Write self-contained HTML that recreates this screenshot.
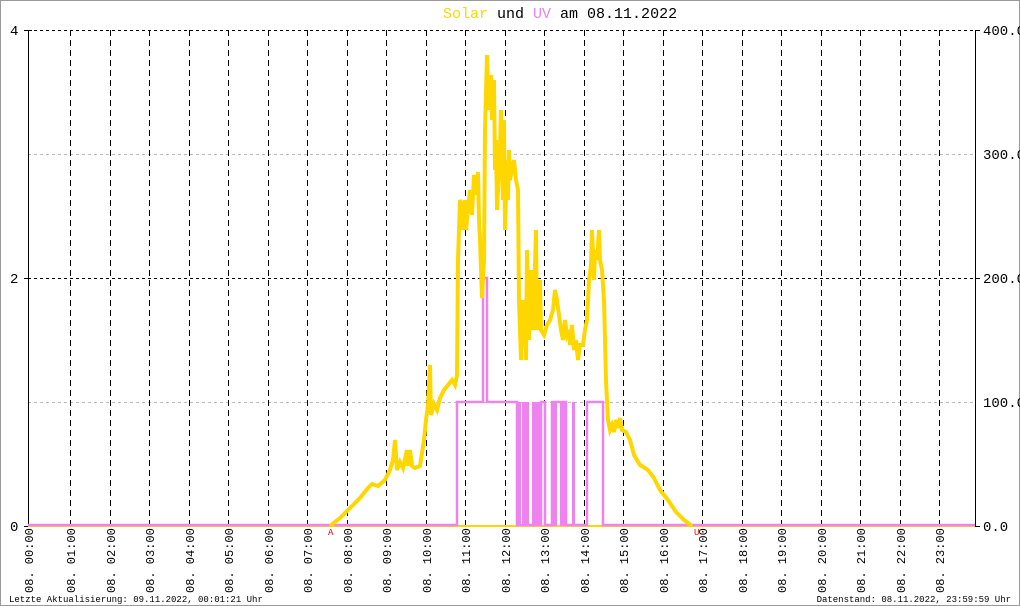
<!DOCTYPE html>
<html><head><meta charset="utf-8"><style>
html,body{margin:0;padding:0;background:#fff}
svg{display:block}
text{font-family:"Liberation Mono",monospace}
</style></head><body>
<svg width="1020" height="606" viewBox="0 0 1020 606" xmlns="http://www.w3.org/2000/svg">
<rect x="0.5" y="0.5" width="1019" height="605" fill="#fff" stroke="#999"/>
<text x="443" y="18" font-size="15" fill="#000"><tspan fill="#FFD700">Solar</tspan> und <tspan fill="#EE82EE">UV</tspan> am 08.11.2022</text>
<g stroke="#bbb" stroke-dasharray="3,3" stroke-width="1">
<line x1="28" y1="154.5" x2="975" y2="154.5"/><line x1="28" y1="402.5" x2="975" y2="402.5"/>
</g>
<g stroke="#000" stroke-dasharray="3,3" stroke-width="1">
<line x1="28" y1="30.5" x2="975" y2="30.5"/><line x1="28" y1="278.5" x2="975" y2="278.5"/>
</g>
<g stroke="#000" stroke-dasharray="6,4" stroke-width="1">
<line x1="70.5" y1="30" x2="70.5" y2="526"/><line x1="110.5" y1="30" x2="110.5" y2="526"/><line x1="149.5" y1="30" x2="149.5" y2="526"/><line x1="189.5" y1="30" x2="189.5" y2="526"/><line x1="228.5" y1="30" x2="228.5" y2="526"/><line x1="268.5" y1="30" x2="268.5" y2="526"/><line x1="307.5" y1="30" x2="307.5" y2="526"/><line x1="347.5" y1="30" x2="347.5" y2="526"/><line x1="386.5" y1="30" x2="386.5" y2="526"/><line x1="426.5" y1="30" x2="426.5" y2="526"/><line x1="465.5" y1="30" x2="465.5" y2="526"/><line x1="505.5" y1="30" x2="505.5" y2="526"/><line x1="544.5" y1="30" x2="544.5" y2="526"/><line x1="584.5" y1="30" x2="584.5" y2="526"/><line x1="623.5" y1="30" x2="623.5" y2="526"/><line x1="663.5" y1="30" x2="663.5" y2="526"/><line x1="702.5" y1="30" x2="702.5" y2="526"/><line x1="742.5" y1="30" x2="742.5" y2="526"/><line x1="781.5" y1="30" x2="781.5" y2="526"/><line x1="821.5" y1="30" x2="821.5" y2="526"/><line x1="860.5" y1="30" x2="860.5" y2="526"/><line x1="900.5" y1="30" x2="900.5" y2="526"/><line x1="939.5" y1="30" x2="939.5" y2="526"/>
</g>
<g stroke="#000" stroke-width="1">
<line x1="28.5" y1="30" x2="28.5" y2="527"/><line x1="975.5" y1="30" x2="975.5" y2="527"/>
<line x1="24" y1="30.5" x2="32" y2="30.5"/><line x1="24" y1="278.5" x2="28" y2="278.5"/><line x1="24" y1="526.5" x2="28" y2="526.5"/>
<line x1="975" y1="30.5" x2="980" y2="30.5"/><line x1="975" y1="278.5" x2="980" y2="278.5"/><line x1="975" y1="526.5" x2="980" y2="526.5"/>
</g>
<g font-size="14" fill="#000">
<text x="10" y="35">4</text><text x="10" y="283">2</text><text x="10" y="531">0</text>
<text x="983" y="35">400.0</text><text x="983" y="159">300.0</text><text x="983" y="283">200.0</text><text x="983" y="407">100.0</text><text x="983" y="531">0.0</text>
</g>
<line x1="28" y1="526" x2="975" y2="526" stroke="#FFD700" stroke-width="2"/>
<g fill="#EE82EE">
<rect x="517" y="402" width="4" height="124"/>
<rect x="522" y="402" width="7" height="124"/>
<rect x="532" y="402" width="9" height="124"/>
<rect x="553" y="402" width="4" height="124"/>
<rect x="560" y="402" width="6" height="124"/>
<rect x="572" y="402" width="3" height="124"/>
</g>
<polyline fill="none" stroke="#EE82EE" stroke-width="2.5" points="28,525 457,525 457,402 483,402 483,278 487,278 487,402 517,402 517,525 541,525 541,402 545,402 545,525 552,525 552,402 566,402 566,525 587,525 587,402 603,402 603,525 975,525"/>
<polyline fill="none" stroke="#FFD700" stroke-width="4" stroke-linejoin="miter" points="330,526 340,518 350,508 360,498 368,488 372,484 378,486 385,480 390,470 393,460 395,440 397,470 400,462 403,468 407,450 408,466 410,450 412,466 415,468 420,466 424,440 426,420 428,405 430,365 431,415 434,404 437,410 440,398 444,390 448,385 452,380 455,385 457,375 458,260 460,200 462,205 463,230 465,200 466,230 468,210 470,190 472,215 474,175 476,195 478,172 479,220 480,240 482,298 484,260 485,130 487,55 488,90 489,110 491,75 492,120 494,80 495,170 496,140 497,210 498,190 500,150 501,110 503,200 504,120 505,230 507,160 508,200 509,150 510,180 512,170 514,160 516,180 518,190 519,300 521,360 523,300 525,320 526,360 527,250 529,340 531,270 533,330 534,300 536,230 537,330 538,310 540,280 541,330 544,335 547,325 550,320 553,310 555,290 557,300 559,315 561,330 563,340 565,320 567,335 569,330 570,345 572,325 574,350 576,340 578,360 580,345 583,345 585,330 587,320 589,280 591,265 592,230 594,280 595,250 597,260 599,230 600,260 602,270 604,300 606,380 608,420 610,430 612,425 614,432 616,420 618,428 620,418 622,430 626,432 630,440 634,455 640,465 648,470 654,478 660,490 668,500 676,512 684,520 692,526"/>
<text x="328" y="535" font-size="9" fill="#e00">A</text>
<text x="694" y="535" font-size="9" fill="#e00">U</text>
<g font-size="12" fill="#000">
<text transform="translate(33,593) rotate(-90)">08. 00:00</text>
<text transform="translate(75,593) rotate(-90)">08. 01:00</text>
<text transform="translate(115,593) rotate(-90)">08. 02:00</text>
<text transform="translate(154,593) rotate(-90)">08. 03:00</text>
<text transform="translate(194,593) rotate(-90)">08. 04:00</text>
<text transform="translate(233,593) rotate(-90)">08. 05:00</text>
<text transform="translate(273,593) rotate(-90)">08. 06:00</text>
<text transform="translate(312,593) rotate(-90)">08. 07:00</text>
<text transform="translate(352,593) rotate(-90)">08. 08:00</text>
<text transform="translate(391,593) rotate(-90)">08. 09:00</text>
<text transform="translate(431,593) rotate(-90)">08. 10:00</text>
<text transform="translate(470,593) rotate(-90)">08. 11:00</text>
<text transform="translate(510,593) rotate(-90)">08. 12:00</text>
<text transform="translate(549,593) rotate(-90)">08. 13:00</text>
<text transform="translate(589,593) rotate(-90)">08. 14:00</text>
<text transform="translate(628,593) rotate(-90)">08. 15:00</text>
<text transform="translate(668,593) rotate(-90)">08. 16:00</text>
<text transform="translate(707,593) rotate(-90)">08. 17:00</text>
<text transform="translate(747,593) rotate(-90)">08. 18:00</text>
<text transform="translate(786,593) rotate(-90)">08. 19:00</text>
<text transform="translate(826,593) rotate(-90)">08. 20:00</text>
<text transform="translate(865,593) rotate(-90)">08. 21:00</text>
<text transform="translate(905,593) rotate(-90)">08. 22:00</text>
<text transform="translate(944,593) rotate(-90)">08. 23:00</text>
</g>
<text x="9" y="602" font-size="9" fill="#000">Letzte Aktualisierung: 09.11.2022, 00:01:21 Uhr</text>
<text x="1011" y="602" font-size="9" fill="#000" text-anchor="end">Datenstand: 08.11.2022, 23:59:59 Uhr</text>
</svg>
</body></html>
